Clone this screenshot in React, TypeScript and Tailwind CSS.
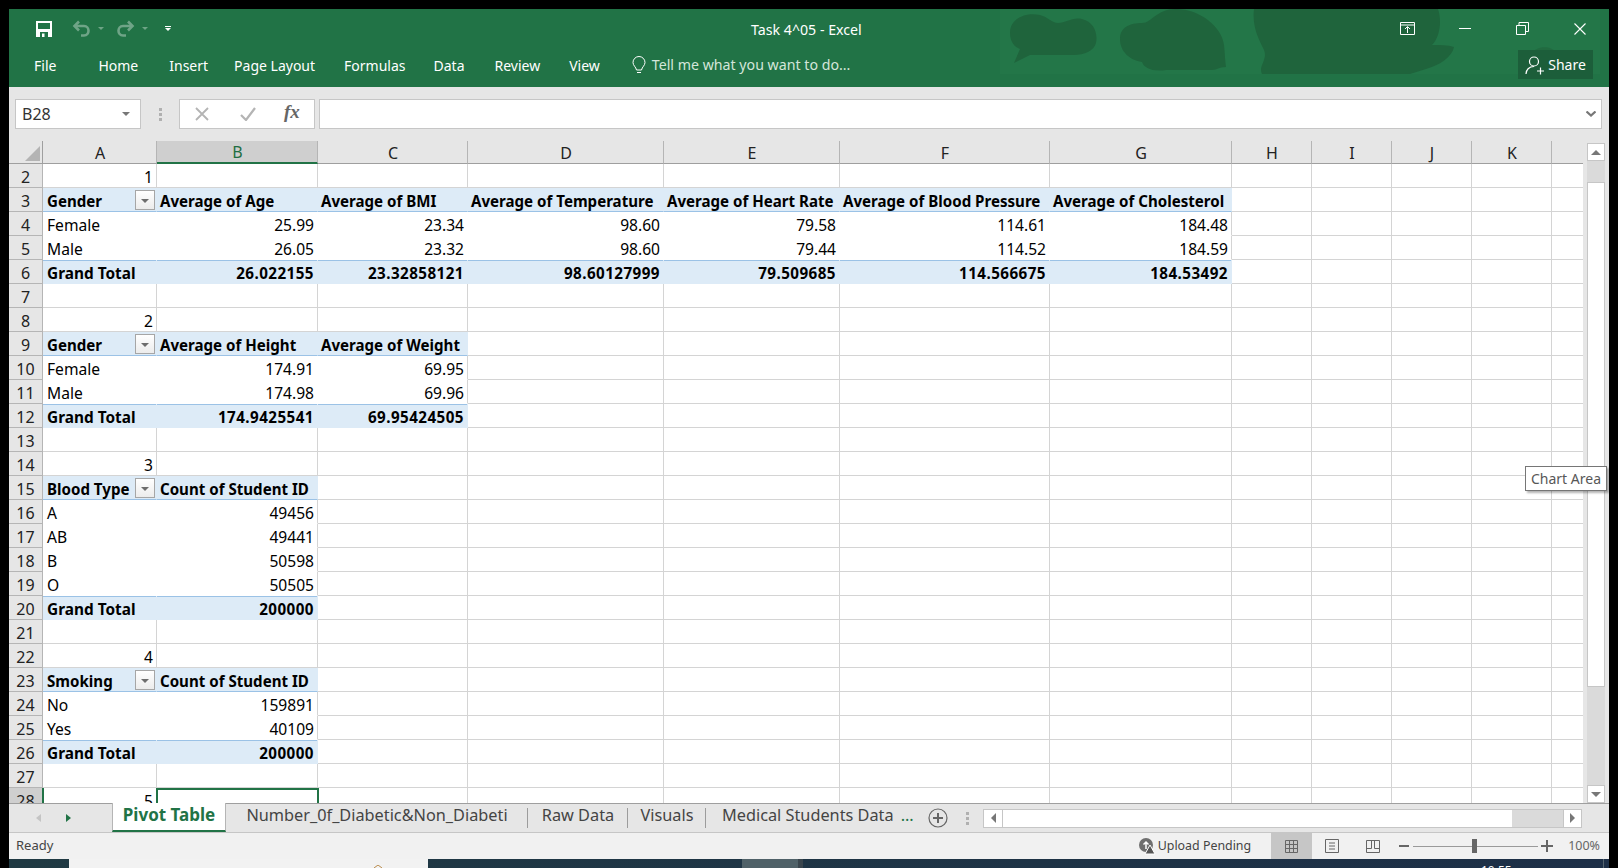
import React from 'react';

const COLS = [114, 161, 150, 196, 176, 210, 182, 80, 80, 80, 80, 32];
const LETTERS = ['A', 'B', 'C', 'D', 'E', 'F', 'G', 'H', 'I', 'J', 'K', ''];

type Row = {
  n: number;
  cells?: string[];
  kind?: 'head' | 'total' | 'num' | 'body';
  span?: number;
  filter?: boolean;
};

const ROWS: Row[] = [
  { n: 2, kind: 'num', cells: ['1'] },
  { n: 3, kind: 'head', span: 7, filter: true, cells: ['Gender', 'Average of Age', 'Average of BMI', 'Average of Temperature', 'Average of Heart Rate', 'Average of Blood Pressure', 'Average of Cholesterol'] },
  { n: 4, kind: 'body', span: 7, cells: ['Female', '25.99', '23.34', '98.60', '79.58', '114.61', '184.48'] },
  { n: 5, kind: 'body', span: 7, cells: ['Male', '26.05', '23.32', '98.60', '79.44', '114.52', '184.59'] },
  { n: 6, kind: 'total', span: 7, cells: ['Grand Total', '26.022155', '23.32858121', '98.60127999', '79.509685', '114.566675', '184.53492'] },
  { n: 7 },
  { n: 8, kind: 'num', cells: ['2'] },
  { n: 9, kind: 'head', span: 3, filter: true, cells: ['Gender', 'Average of Height', 'Average of Weight'] },
  { n: 10, kind: 'body', span: 3, cells: ['Female', '174.91', '69.95'] },
  { n: 11, kind: 'body', span: 3, cells: ['Male', '174.98', '69.96'] },
  { n: 12, kind: 'total', span: 3, cells: ['Grand Total', '174.9425541', '69.95424505'] },
  { n: 13 },
  { n: 14, kind: 'num', cells: ['3'] },
  { n: 15, kind: 'head', span: 2, filter: true, cells: ['Blood Type', 'Count of Student ID'] },
  { n: 16, kind: 'body', span: 2, cells: ['A', '49456'] },
  { n: 17, kind: 'body', span: 2, cells: ['AB', '49441'] },
  { n: 18, kind: 'body', span: 2, cells: ['B', '50598'] },
  { n: 19, kind: 'body', span: 2, cells: ['O', '50505'] },
  { n: 20, kind: 'total', span: 2, cells: ['Grand Total', '200000'] },
  { n: 21 },
  { n: 22, kind: 'num', cells: ['4'] },
  { n: 23, kind: 'head', span: 2, filter: true, cells: ['Smoking', 'Count of Student ID'] },
  { n: 24, kind: 'body', span: 2, cells: ['No', '159891'] },
  { n: 25, kind: 'body', span: 2, cells: ['Yes', '40109'] },
  { n: 26, kind: 'total', span: 2, cells: ['Grand Total', '200000'] },
  { n: 27 },
  { n: 28, kind: 'num', cells: ['5'] },
];

const SANS = "font-['Noto_Sans',sans-serif]";

function FilterButton() {
  return (
    <div className="absolute right-[1px] top-[2px] flex h-[20px] w-[20px] items-center justify-center border border-[#a6a6a6] bg-gradient-to-b from-white to-[#ececec]">
      <div className="mt-[1px] h-0 w-0 border-x-[4px] border-t-[4px] border-x-transparent border-t-[#6d6d6d]" />
    </div>
  );
}

function cellBorders(row: Row, i: number) {
  const inPivot = i < (row.span ?? 0);
  const last = i === (row.span ?? 0) - 1;
  if (row.kind === 'body' && inPivot) {
    return `bg-white border-b-white ${last ? 'border-r-[#d4d4d4]' : 'border-r-white'}`;
  }
  if (row.kind === 'head' && inPivot) return 'bg-[#ddebf7] border-r-[#ddebf7] border-b-[#9bc2e6]';
  if (row.kind === 'total' && inPivot) return 'bg-[#ddebf7] border-r-[#ddebf7] border-b-[#ddebf7] shadow-[inset_0_1px_0_#9bc2e6]';
  return 'border-r-[#d4d4d4] border-b-[#d4d4d4]';
}

function cellFont(row: Row, i: number) {
  if (row.kind === 'head') return 'pt-[3px] font-bold text-[15.1px]';
  if (row.kind === 'total') return i === 0 ? 'pt-[4px] font-bold text-[15.4px]' : 'pt-[3px] font-bold text-[15.2px] tracking-[0.45px]';
  return 'pt-[4px] text-[15.6px]';
}

function SheetRow({ row }: { row: Row }) {
  return (
    <div className="flex h-[24px] shrink-0">
      <div className={`flex w-[34px] shrink-0 items-center justify-center border-r border-b border-[#b5b5b5] pt-[3px] text-[16px] text-[#222] ${row.n === 28 ? 'bg-[#cfcfcf]' : 'bg-[#e6e6e6]'}`}>
        {row.n}
      </div>
      {COLS.map((w, i) => {
        const right = row.kind === 'num' || (row.kind !== 'head' && i > 0);
        return (
          <div
            key={i}
            style={{ width: w }}
            className={`relative flex shrink-0 items-center whitespace-nowrap border-r border-b pr-[3px] text-black ${i === 0 ? 'pl-[4px]' : 'pl-[3px]'} ${right ? 'justify-end' : 'justify-start'} ${cellBorders(row, i)} ${cellFont(row, i)}`}
          >
            <span>{row.cells?.[i]}</span>
            {i === 0 && row.filter && <FilterButton />}
          </div>
        );
      })}
    </div>
  );
}

function TitleArt() {
  return (
    <svg className="absolute left-[991px] top-0 h-[65px] w-[600px]" viewBox="0 0 600 65">
      <rect x="0" y="0" width="600" height="65" fill="#26794b" opacity="0.55" />
      <path d="M10 24C10 8 28 3 40 6c8 2 12 8 18 8 8 0 14-6 24-4 12 3 16 14 14 24-2 8-12 12-22 12H30l-16 8 6-14C14 38 10 32 10 24z" fill="#1f643c" />
      <path d="M120 30c0-12 10-16 22-16 10 0 14-14 34-14 24 0 46 18 48 36 1 10 1 14 2 22-8 0-8 3-14 3h-46c-14 2-22-2-24-8-12-2-22-10-22-23z" fill="#1f643c" />
      <path d="M254 0h184c4 12 2 28-6 36 8 0 16 0 22 2-2 10-14 18-28 22l-16 5H262c-4-8 6-14 2-24-6-12-12-24-10-41z" fill="#1f643c" />
      <path d="M530 46c6-10 22-10 26-2 4 6 2 16-4 21h-22c-4-6-4-12 0-19z" fill="#1f643c" opacity="0.6" />
    </svg>
  );
}

function Tab({ label, active, sep = true, width }: { label: string; active?: boolean; sep?: boolean; width: number }) {
  return (
    <div style={{ width }} className="relative flex h-full shrink-0 items-center justify-center">
      {active ? (
        <div className="mb-[1px] flex h-[29px] w-full items-center justify-center border-x border-b-[2px] border-x-[#b5b5b5] border-b-[#217346] bg-white pb-[4px] text-[17px] font-bold text-[#217346]">
          {label}
        </div>
      ) : (
        <span className="mb-[6px] whitespace-nowrap text-[16.300px] text-[#444]">{label}</span>
      )}
      {sep && !active && <div className="absolute right-0 top-[4px] h-[20px] w-px bg-[#9c9c9c]" />}
    </div>
  );
}

function Grip() {
  return (
    <div className="flex w-[4px] flex-col gap-[2px]">
      <div className="h-[3px] w-[3px] bg-[#b0b0b0]" />
      <div className="h-[3px] w-[3px] bg-[#b0b0b0]" />
      <div className="h-[3px] w-[3px] bg-[#b0b0b0]" />
    </div>
  );
}

export default function App() {
  return (
    <div className={`flex h-[868px] w-[1618px] flex-col overflow-hidden bg-black pt-[9px] pl-[9px] pr-[9px] ${SANS}`}>
      <div className="flex min-h-0 flex-1 flex-col">
        {/* title + ribbon tabs */}
        <div className="relative h-[78px] shrink-0 overflow-hidden bg-[#217346] text-white">
          <TitleArt />
          <div className="relative flex h-[39px] items-center">
            <svg className="ml-[27px] h-[16px] w-[16px]" viewBox="0 0 16 16">
              <path d="M0 0h16v16H0z" fill="white" />
              <path d="M2 2h12v6H2z" fill="#217346" />
              <path d="M4 16v-5h8v5z" fill="#217346" />
              <path d="M6 12.500h2.500V16H6z" fill="white" />
            </svg>
            <svg className="ml-[20px] h-[17px] w-[19px] opacity-35" viewBox="0 0 19 17" fill="none" stroke="white" strokeWidth="2.600">
              <path d="M7 1.500L2.500 6 7 10.500" />
              <path d="M3 6h9c6 0 6 9.500 0 9.500H9" />
            </svg>
            <div className="ml-[7px] h-0 w-0 border-x-[3px] border-t-[3px] border-x-transparent border-t-white opacity-35" />
            <svg className="ml-[12px] h-[17px] w-[19px] opacity-35" viewBox="0 0 19 17" fill="none" stroke="white" strokeWidth="2.600">
              <path d="M12 1.500L16.500 6 12 10.500" />
              <path d="M16 6H7c-6 0-6 9.500 0 9.500h3" />
            </svg>
            <div className="ml-[7px] h-0 w-0 border-x-[3px] border-t-[3px] border-x-transparent border-t-white opacity-35" />
            <div className="ml-[17px] flex flex-col items-center gap-[1px]">
              <div className="h-px w-[6px] bg-white" />
              <div className="h-0 w-0 border-x-[3px] border-t-[3px] border-x-transparent border-t-white" />
            </div>
            <div className="absolute left-[742px] top-[10px] text-[14.200px]">Task 4^05 - Excel</div>
            <div className="ml-auto flex items-center">
              <svg className="mr-[44px] h-[13px] w-[15px]" viewBox="0 0 15 13" fill="none" stroke="white">
                <path d="M.5.5h14v12H.5zM.5 3h14M7.500 11V5M5 7l2.500-2.500L10 7" />
              </svg>
              <div className="mr-[45px] h-px w-[12px] bg-white" />
              <svg className="mr-[45px] h-[13px] w-[13px]" viewBox="0 0 13 13" fill="none" stroke="white">
                <path d="M.5 3.500h9v9h-9zM3 3.500V.5h9.500v9H9.500" />
              </svg>
              <svg className="mr-[23px] h-[12px] w-[12px]" viewBox="0 0 12 12" stroke="white" strokeWidth="1.100">
                <path d="M.5.5l11 11M11.500.5l-11 11" />
              </svg>
            </div>
          </div>
          <div className="relative flex h-[39px] items-center pb-[5px] text-[14px]">
            <span className="ml-[25px]">File</span>
            <span className="ml-[42px]">Home</span>
            <span className="ml-[31px]">Insert</span>
            <span className="ml-[26px]">Page Layout</span>
            <span className="ml-[29px]">Formulas</span>
            <span className="ml-[28px]">Data</span>
            <span className="ml-[30px]">Review</span>
            <span className="ml-[29px]">View</span>
            <svg className="ml-[32px] h-[19px] w-[14px]" viewBox="0 0 14 19" fill="none" stroke="white">
              <path d="M4.500 14C4 11 1 9.500 1 6.500a6 6 0 0112 0C13 9.500 10 11 9.500 14zM5 16.500h4" />
            </svg>
            <span className="ml-[6px] text-[14.200px] text-[#d4e6da]">Tell me what you want to do...</span>
            <div className="absolute right-[16px] top-[2px] flex h-[29px] w-[75px] items-center justify-center gap-[3px] bg-[#1c5e3a]">
              <svg className="h-[20px] w-[20px]" viewBox="0 0 20 20" fill="none" stroke="white" strokeWidth="1.200">
                <circle cx="9" cy="6.500" r="4.500" />
                <path d="M1 19c0-4 3-7.500 8-7.500M12 16h7M15.500 12.500v7" />
              </svg>
              <span className="text-[14px]">Share</span>
            </div>
          </div>
        </div>

        {/* formula bar */}
        <div className="flex h-[54px] shrink-0 items-center bg-[#e6e6e6] pb-[12px] pt-[12px] pl-[6px] pr-[7px]">
          <div className="flex h-[30px] w-[126px] items-center justify-between border border-[#c6c6c6] bg-white pl-[6px] pr-[10px] text-[16px] text-[#333]">
            <span>B28</span>
            <div className="h-0 w-0 border-x-[4px] border-t-[4px] border-x-transparent border-t-[#777]" />
          </div>
          <div className="ml-[18px]"><Grip /></div>
          <div className="ml-[16px] flex h-[30px] w-[136px] items-center border border-[#c6c6c6] bg-white">
            <svg className="ml-[15px] h-[14px] w-[14px]" viewBox="0 0 14 14" stroke="#b4b4b4" strokeWidth="1.800">
              <path d="M1 1l12 12M13 1L1 13" />
            </svg>
            <svg className="ml-[31px] h-[14px] w-[16px]" viewBox="0 0 16 14" fill="none" stroke="#b4b4b4" strokeWidth="2.200">
              <path d="M1 8l5 5L15 1" />
            </svg>
            <span className="mb-[3px] ml-[28px] font-['Liberation_Serif',serif] text-[19px] font-bold italic text-[#666]">fx</span>
          </div>
          <div className="ml-[4px] flex h-[30px] flex-1 items-center justify-end border border-[#c6c6c6] bg-white pr-[5px]">
            <svg className="h-[6px] w-[10px]" viewBox="0 0 10 6" fill="none" stroke="#777" strokeWidth="2.200">
              <path d="M.5.5L5 4.500 9.500.5" />
            </svg>
          </div>
        </div>

        {/* sheet area */}
        <div className="flex min-h-0 flex-1 bg-[#e6e6e6]">
          <div className="relative min-w-0 flex-1 overflow-hidden bg-white">
            <div className="flex h-[23px] bg-[#e6e6e6]">
              <div className="flex w-[34px] shrink-0 items-end justify-end border-r border-b border-[#9f9f9f] pb-[2px] pr-[2px]">
                <div className="h-0 w-0 border-b-[15px] border-l-[15px] border-b-[#b4b4b4] border-l-transparent" />
              </div>
              {COLS.map((w, i) => (
                <div
                  key={i}
                  style={{ width: w }}
                  className={`flex shrink-0 items-center justify-center border-r pt-[1px] pl-[1px] text-[16px] ${i === 1 ? 'border-b-[2px] border-b-[#217346] bg-[#cfcfcf] text-[#1f6e43]' : 'border-b border-b-[#9f9f9f] text-[#222]'} ${i === 11 ? 'border-r-transparent' : 'border-r-[#b5b5b5]'}`}
                >
                  {LETTERS[i]}
                </div>
              ))}
            </div>
            {ROWS.map((row) => (
              <SheetRow key={row.n} row={row} />
            ))}
            {/* selected cell B28 */}
            <div className="absolute left-[147px] top-[647px] h-[30px] w-[163px] border-[2px] border-[#217346]" />
            {/* A28 active edge */}
            <div className="absolute left-[33px] top-[647px] h-[30px] w-[2px] bg-[#217346]" />
          </div>

          {/* vertical scrollbar */}
          <div className="flex w-[26px] shrink-0 flex-col pl-[4px] pr-[4px] pt-[2px]">
            <div className="flex h-[18px] shrink-0 items-center justify-center border border-[#c6c6c6] bg-white">
              <div className="h-0 w-0 border-x-[5px] border-b-[5px] border-x-transparent border-b-[#777]" />
            </div>
            <div className="flex flex-1 flex-col bg-[#dadada] pt-[21px]">
              <div className="h-[505px] border border-[#c6c6c6] bg-white" />
            </div>
            <div className="flex h-[18px] shrink-0 items-center justify-center border border-[#c6c6c6] bg-white">
              <div className="h-0 w-0 border-x-[5px] border-t-[5px] border-x-transparent border-t-[#777]" />
            </div>
          </div>
        </div>

        {/* sheet tabs */}
        <div className="flex h-[30px] shrink-0 items-center border-y border-b-[#c6c6c6] border-t-[#9f9f9f] bg-[#e6e6e6]">
          <div className="ml-[27px] h-0 w-0 border-y-[4px] border-r-[5px] border-y-transparent border-r-[#c4c4c4]" />
          <div className="ml-[25px] h-0 w-0 border-y-[4px] border-l-[5px] border-y-transparent border-l-[#217346]" />
          <div className="ml-[41px] flex h-full items-center">
            <Tab label="Pivot Table" active width={114} />
            <Tab label="Number_0f_Diabetic&Non_Diabeti" width={302} />
            <Tab label="Raw Data" width={100} />
            <Tab label="Visuals" width={78} />
            <div className="flex h-full w-[222px] shrink-0 items-center pl-[16px]">
              <span className="mb-[6px] whitespace-nowrap text-[16.300px] text-[#444]">Medical Students Data</span>
              <span className="mb-[6px] ml-[7px] text-[16.300px] text-[#217346]">...</span>
            </div>
          </div>
          <svg className="h-[20px] w-[20px]" viewBox="0 0 20 20" fill="none" stroke="#666">
            <circle cx="10" cy="10" r="9" strokeWidth="1.200" />
            <path d="M10 5v10M5 10h10" strokeWidth="2" />
          </svg>
          <div className="ml-[18px]"><Grip /></div>
          <div className="ml-[13px] flex h-[19px] w-[599px] shrink-0 border border-[#c6c6c6] bg-[#dadada]">
            <div className="flex w-[19px] items-center justify-center border-r border-[#c6c6c6] bg-white">
              <div className="h-0 w-0 border-y-[5px] border-r-[5px] border-y-transparent border-r-[#777]" />
            </div>
            <div className="w-[509px] bg-white" />
            <div className="ml-auto flex w-[18px] items-center justify-center border-l border-[#c6c6c6] bg-white">
              <div className="h-0 w-0 border-y-[5px] border-l-[5px] border-y-transparent border-l-[#777]" />
            </div>
          </div>
        </div>

        {/* status bar */}
        <div className="flex h-[26px] shrink-0 items-center bg-[#f1f1f1] text-[13px] text-[#444]">
          <span className="ml-[7px]">Ready</span>
          <div className="ml-auto flex items-center">
            <svg className="h-[18px] w-[18px]" viewBox="0 0 18 18">
              <circle cx="8" cy="8" r="7" fill="#6f6f6f" />
              <path d="M8 12V5M5.500 7.500L8 5l2.500 2.500" fill="none" stroke="white" strokeWidth="1.500" />
              <path d="M12 8l5 9H7z" fill="#555" stroke="white" />
            </svg>
            <span className="ml-[2px] text-[12.400px]">Upload Pending</span>
            <div className="ml-[20px] flex h-[26px] w-[41px] items-center justify-center bg-[#c6c6c6]">
              <svg className="h-[13px] w-[13px]" viewBox="0 0 13 13" fill="none" stroke="#666">
                <path d="M.5.5h12v12H.5zM4.500.5v12M8.500.5v12M.5 4.500h12M.5 8.500h12" />
              </svg>
            </div>
            <svg className="ml-[13px] h-[14px] w-[14px]" viewBox="0 0 14 14" fill="none" stroke="#666">
              <path d="M.5.5h13v13H.5zM4 4h6M4 7h6M4 10h6" />
            </svg>
            <svg className="ml-[27px] h-[13px] w-[14px]" viewBox="0 0 14 13" fill="none" stroke="#666">
              <path d="M.5.5h13v12H.5zM.5 8.500h5V.5M8.500.5v8h5" />
            </svg>
            <div className="ml-[19px] h-[2px] w-[10px] bg-[#666]" />
            <div className="relative ml-[4px] h-px w-[125px] bg-[#9a9a9a]">
              <div className="absolute left-[59px] top-[-7px] h-[14px] w-[5px] bg-[#666]" />
            </div>
            <svg className="ml-[3px] h-[12px] w-[12px]" viewBox="0 0 12 12" stroke="#666" strokeWidth="2">
              <path d="M0 6h12M6 0v12" />
            </svg>
            <span className="ml-[15px] mr-[9px] text-[12.500px] text-[#666]">100%</span>
          </div>
        </div>

        {/* bit of the desktop taskbar showing under the window */}
        <div className="flex h-[9px] shrink-0 overflow-hidden bg-gradient-to-r from-[#203a43] to-[#1d2f47]">
          <div className="ml-[60px] flex h-full w-[359px] justify-end bg-[#f2f2f2] pr-[45px]">
            <svg className="mt-[6px] h-[3px] w-[10px]" viewBox="0 0 10 3" fill="none" stroke="#b98a4a">
              <path d="M1 3l4-3 4 3" />
            </svg>
          </div>
          <div className="ml-[314px] h-full w-[56px] bg-[#4f6168]" />
          <div className="h-full w-[5px] bg-[#39454d]" />
          <div className="ml-[678px] pt-[6px] text-[12px] leading-none text-white">10:55</div>
          <div className="ml-auto mr-[5px] h-full w-px bg-[#55646f]" />
        </div>
      </div>

      {/* hover tooltip */}
      <div className="absolute left-[1525px] top-[466px] flex h-[25px] w-[82px] items-center justify-center border border-[#767676] bg-white text-[14px] text-[#575757] shadow-[2px_2px_2px_rgba(0,0,0,0.3)]">
        Chart Area
      </div>
    </div>
  );
}
